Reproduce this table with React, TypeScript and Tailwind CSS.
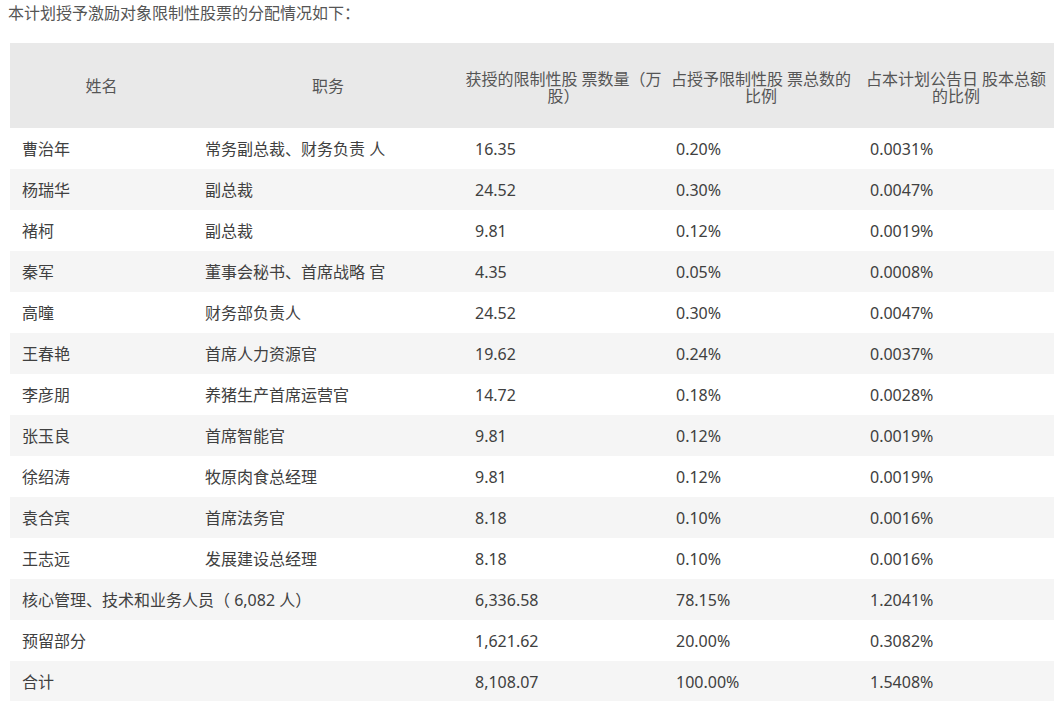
import React from "react";

const rows: [string, string, string, string, string][] = [
  ["曹治年", "常务副总裁、财务负责 人", "16.35", "0.20%", "0.0031%"],
  ["杨瑞华", "副总裁", "24.52", "0.30%", "0.0047%"],
  ["褚柯", "副总裁", "9.81", "0.12%", "0.0019%"],
  ["秦军", "董事会秘书、首席战略 官", "4.35", "0.05%", "0.0008%"],
  ["高曈", "财务部负责人", "24.52", "0.30%", "0.0047%"],
  ["王春艳", "首席人力资源官", "19.62", "0.24%", "0.0037%"],
  ["李彦朋", "养猪生产首席运营官", "14.72", "0.18%", "0.0028%"],
  ["张玉良", "首席智能官", "9.81", "0.12%", "0.0019%"],
  ["徐绍涛", "牧原肉食总经理", "9.81", "0.12%", "0.0019%"],
  ["袁合宾", "首席法务官", "8.18", "0.10%", "0.0016%"],
  ["王志远", "发展建设总经理", "8.18", "0.10%", "0.0016%"],
];

const spanRows: [string, string, string, string][] = [
  ["核心管理、技术和业务人员（ 6,082 人）", "6,336.58", "78.15%", "1.2041%"],
  ["预留部分", "1,621.62", "20.00%", "0.3082%"],
  ["合计", "8,108.07", "100.00%", "1.5408%"],
];

export default function App() {
  const font = { fontFamily: '"Noto Sans", "Noto Sans CJK SC", sans-serif' };
  return (
    <div className="w-[1056px] h-[701px] bg-white overflow-hidden" style={font}>
      <p className="pl-[8px] pt-[2px] h-[43px] text-[16px] leading-[22px] text-[#555]">
        本计划授予激励对象限制性股票的分配情况如下：
      </p>
      <table className="ml-[10px] w-[1044px] table-fixed border-collapse text-[16px] text-[#404040]">
        <colgroup>
          <col className="w-[183px]" />
          <col className="w-[270px]" />
          <col className="w-[201px]" />
          <col className="w-[194px]" />
          <col className="w-[196px]" />
        </colgroup>
        <thead>
          <tr className="h-[85px] bg-[#e9e9e9] text-[#555] text-[16px] leading-[17px]">
            <th className="font-normal text-center align-middle pt-[2px]">姓名</th>
            <th className="font-normal text-center align-middle pt-[2px]">职务</th>
            <th className="font-normal text-center align-middle pt-[4px] px-0 whitespace-nowrap">
              <span className="block">获授的限制性股 票数量（万</span>
              <span className="block">股）</span>
            </th>
            <th className="font-normal text-center align-middle pt-[4px] px-0 whitespace-nowrap">
              <span className="block">占授予限制性股 票总数的</span>
              <span className="block">比例</span>
            </th>
            <th className="font-normal text-center align-middle pt-[4px] px-0 whitespace-nowrap">
              <span className="block">占本计划公告日 股本总额</span>
              <span className="block">的比例</span>
            </th>
          </tr>
        </thead>
        <tbody>
          {rows.map((r, i) => (
            <tr key={i} className={`h-[41px] ${i % 2 === 1 ? "bg-[#f5f5f5]" : "bg-white"}`}>
              {r.map((c, j) => (
                <td key={j} className="pl-[12px] align-middle whitespace-nowrap">
                  {c}
                </td>
              ))}
            </tr>
          ))}
          {spanRows.map((r, i) => (
            <tr key={`s${i}`} className={`h-[41px] ${i % 2 === 0 ? "bg-[#f5f5f5]" : "bg-white"}`}>
              <td colSpan={2} className="pl-[12px] align-middle whitespace-nowrap">
                {r[0]}
              </td>
              <td className="pl-[12px] align-middle">{r[1]}</td>
              <td className="pl-[12px] align-middle">{r[2]}</td>
              <td className="pl-[12px] align-middle">{r[3]}</td>
            </tr>
          ))}
        </tbody>
      </table>
    </div>
  );
}
